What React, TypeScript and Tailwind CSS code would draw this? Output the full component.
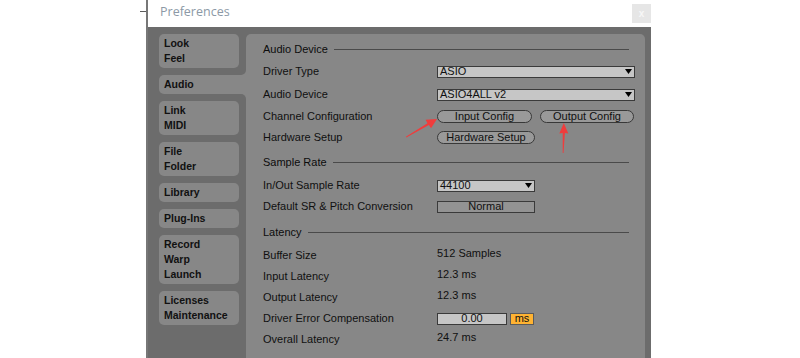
import React from "react";

const Tri = () => (
  <svg width="7" height="5" viewBox="0 0 7 5" className="shrink-0">
    <path d="M0 0H7L3.5 5Z" fill="#000" />
  </svg>
);

function Header({ title }: { title: string }) {
  return (
    <div className="flex items-center h-[20px] mr-[6px]">
      <span className="text-[#0c0c0c]">{title}</span>
      <div className="flex-1 h-px bg-[#4a4a4a] ml-[6px]" />
    </div>
  );
}

function Row({ label, children, cls }: { label: string; children?: React.ReactNode; cls: string }) {
  return (
    <div className={cls}>
      <div className="w-[174px] shrink-0">{label}</div>
      {children}
    </div>
  );
}

function Tab({ lines }: { lines: string[] }) {
  return (
    <div className="w-[80px] rounded-[5px] bg-[#878787] px-[5px] py-[2px] leading-[15px] text-[10.5px] font-bold text-[#111]">
      {lines.map((l) => (
        <div key={l}>{l}</div>
      ))}
    </div>
  );
}

export default function App() {
  return (
    <div className="relative w-[800px] h-[358px] bg-white overflow-hidden flex font-['Liberation_Sans',Arial,sans-serif]">
      <div className="w-[146px] shrink-0 pt-[11px] flex flex-col items-end">
        <div className="w-[6px] h-px bg-[#5c5c5c]" />
      </div>
      <div className="w-[2px] shrink-0 bg-[#777777]" />
      <div className="w-[503px] shrink-0 flex flex-col">
        <div className="h-[27px] shrink-0 bg-white flex items-start justify-between">
          <span className="pl-[12px] pt-[3px] text-[12.5px] text-[#8c99a6] font-['Open_Sans',sans-serif]">
            Preferences
          </span>
          <div className="mt-[4px] w-[19px] h-[19px] bg-[#e6e6e6] flex items-center justify-center text-[#f7f7f7] text-[10px] font-bold leading-none">
            x
          </div>
        </div>
        <div className="flex-1 bg-[#6c6c6c] flex pt-[7px] pl-[11px] pr-[6px]">
          {/* tabs */}
          <div className="w-[87px] shrink-0 flex flex-col gap-[7px]">
            <Tab lines={["Look", "Feel"]} />
            <div className="flex">
              <div className="w-[80px] rounded-l-[5px] bg-[#878787] px-[5px] py-[2px] leading-[15px] text-[10.5px] font-bold text-[#111]">
                Audio
              </div>
              <div className="w-[7px] bg-[#878787] relative">
                <div className="absolute left-0 bottom-full w-[7px] h-[7px] bg-[#878787]">
                  <div className="w-full h-full bg-[#6c6c6c] rounded-br-[5px]" />
                </div>
                <div className="absolute left-0 top-full w-[7px] h-[7px] bg-[#878787]">
                  <div className="w-full h-full bg-[#6c6c6c] rounded-tr-[5px]" />
                </div>
              </div>
            </div>
            <Tab lines={["Link", "MIDI"]} />
            <Tab lines={["File", "Folder"]} />
            <Tab lines={["Library"]} />
            <Tab lines={["Plug-Ins"]} />
            <Tab lines={["Record", "Warp", "Launch"]} />
            <Tab lines={["Licenses", "Maintenance"]} />
          </div>
          {/* panel */}
          <div className="flex-1 bg-[#878787] rounded-t-[5px] pl-[17px] pr-[10px] pt-[5px] text-[11px] leading-none text-[#101010]">
            <Header title="Audio Device" />
            <Row label="Driver Type" cls="flex items-center h-[21px] mt-[2px]">
              <div className="flex-1 h-[12px] bg-[#c6c6c6] border border-[#3a3a3a] flex items-center justify-between pl-[2px] pr-[2px]">
                <span>ASIO</span>
                <Tri />
              </div>
            </Row>
            <Row label="Audio Device" cls="flex items-center h-[21px] mt-[2px]">
              <div className="flex-1 h-[12px] bg-[#c6c6c6] border border-[#3a3a3a] flex items-center justify-between pl-[2px] pr-[2px]">
                <span>ASIO4ALL v2</span>
                <Tri />
              </div>
            </Row>
            <Row label="Channel Configuration" cls="flex items-center h-[21px] mt-[1px]">
              <div className="w-[95px] h-[13px] rounded-full bg-[#999999] border border-[#383838] flex items-center justify-center">
                Input Config
              </div>
              <div className="w-[94px] h-[13px] ml-[8px] rounded-full bg-[#999999] border border-[#383838] flex items-center justify-center">
                Output Config
              </div>
            </Row>
            <Row label="Hardware Setup" cls="flex items-center h-[21px]">
              <div className="w-[98px] h-[13px] rounded-full bg-[#999999] border border-[#383838] flex items-center justify-center">
                Hardware Setup
              </div>
            </Row>

            <div className="mt-[4px]">
              <Header title="Sample Rate" />
            </div>
            <Row label="In/Out Sample Rate" cls="flex items-center h-[21px] mt-[3px]">
              <div className="w-[98px] h-[12px] bg-[#c6c6c6] border border-[#3a3a3a] flex items-center justify-between pl-[2px] pr-[2px]">
                <span>44100</span>
                <Tri />
              </div>
            </Row>
            <Row label="Default SR & Pitch Conversion" cls="flex items-center h-[21px]">
              <div className="w-[98px] h-[12px] bg-[#939393] border border-[#3a3a3a] flex items-center justify-center">
                Normal
              </div>
            </Row>

            <div className="mt-[5px]">
              <Header title="Latency" />
            </div>
            <div className="mt-[3px]">
              <Row label="Buffer Size" cls="flex items-center h-[21px]">
                <span className="pb-[4px]">512 Samples</span>
              </Row>
              <Row label="Input Latency" cls="flex items-center h-[21px]">
                <span className="pb-[4px]">12.3 ms</span>
              </Row>
              <Row label="Output Latency" cls="flex items-center h-[21px]">
                <span className="pb-[4px]">12.3 ms</span>
              </Row>
              <Row label="Driver Error Compensation" cls="flex items-center h-[21px]">
                <div className="w-[70px] h-[12px] bg-[#c6c6c6] border border-[#3a3a3a] flex items-center justify-center">
                  0.00
                </div>
                <div className="w-[24px] h-[12px] ml-[3px] bg-[#ffb332] border border-[#5a5a5a] flex items-center justify-center">
                  ms
                </div>
              </Row>
              <Row label="Overall Latency" cls="flex items-center h-[21px]">
                <span className="pb-[4px]">24.7 ms</span>
              </Row>
            </div>
          </div>
        </div>
      </div>

      {/* red annotation arrows */}
      <svg className="absolute left-0 top-0 pointer-events-none" width="800" height="358" viewBox="0 0 800 358">
        <polygon
          points="405.8,136.7 427.5,123.2 425.6,119.8 437,119 431,128.2 428.9,125 406.3,137.4"
          fill="#f03c3c"
        />
        <polygon
          points="562.7,153 562.7,133 559.3,133.5 563.8,123 568.3,133.5 564.9,133 563.5,153"
          fill="#f03c3c"
        />
      </svg>
    </div>
  );
}
